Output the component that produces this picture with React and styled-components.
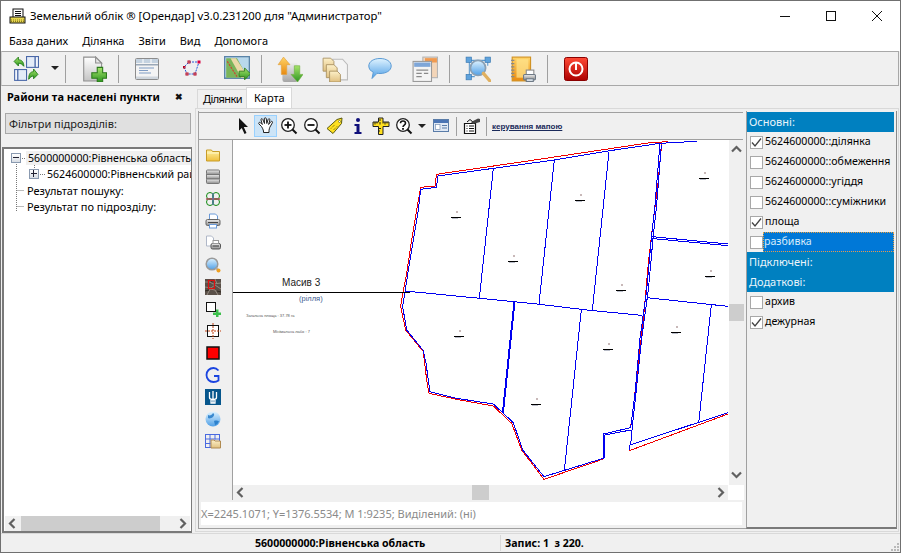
import React from "react";
import styled, { createGlobalStyle } from "styled-components";

const UI_FONT = `"Noto Sans", "Liberation Sans", sans-serif`;

const GlobalStyle = createGlobalStyle`
    html, body { margin: 0; padding: 0; background: #f0f0f0; }
    body { font-family: ${UI_FONT}; font-size: 11px; color: #000; }
    #root { width: 901px; height: 553px; overflow: hidden; }
`;

const Grads = () => {
    const list = [
        ["gPage", "#ffffff", "#c4c4c4"], ["gGreen", "#a6e46a", "#2c9420"], ["gOrange", "#ffd468", "#e88a10"],
        ["gBlue", "#dff3ff", "#4f9fe6"], ["gFolder", "#fff2a8", "#efbf3c"], ["gRed", "#ff4a36", "#ac0000"],
        ["gSteel", "#eeeeee", "#8c8c8c"], ["gTan", "#fdf0c8", "#e0c080"],
    ];
    return (
        <HiddenSvg>
            <defs>
                {list.map(([id, a, b]) => (
                    <linearGradient key={id} id={id} x1="0" y1="0" x2="0" y2="1">
                        <stop offset="0" stopColor={a} />
                        <stop offset="1" stopColor={b} />
                    </linearGradient>
                ))}
            </defs>
        </HiddenSvg>
    );
};

/* --------- toolbar icons (24 box) --------- */
const I = ({ s = 24, children }) => <svg width={s} height={s} viewBox="0 0 24 24">{children}</svg>;

const SyncIcon = () => (
    <I s={26}>
        <g fill="#e4ecf8" stroke="#4a68a8" strokeWidth="1">
            <rect x="12.5" y="0.5" width="8" height="10" /><rect x="20.5" y="0.5" width="3" height="10" fill="#f4f7fc" />
            <rect x="1.5" y="12.5" width="3" height="10" fill="#f4f7fc" /><rect x="4.5" y="12.5" width="8" height="10" />
        </g>
        <path d="M1 5l4-4v2.500c3 0 5 2 5 6-1.500-2-3-2.800-5-2.800v2.500z" fill="url(#gGreen)" stroke="#1c7a14" strokeWidth=".8" />
        <path d="M23 17l-4-5v2.500c-3 0-4.500 2-4.500 7 1.500-2 2.500-3 4.500-3v2.500z" fill="url(#gGreen)" stroke="#1c7a14" strokeWidth=".8" />
    </I>
);
const NewDocIcon = () => (
    <I s={26}>
        <path d="M2.500 1h11l5.500 5.500V23H2.500z" fill="url(#gPage)" stroke="#8f8f8f" />
        <path d="M13.500 1v5.500H19z" fill="#e8e8e8" stroke="#8f8f8f" />
        <path d="M15 10.500h5v5h3.500v5H20v3.500h-5v-3.500h-5v-5h5z" fill="url(#gGreen)" stroke="#2c7a1c" />
    </I>
);
const WindowIcon = () => (
    <I>
        <rect x=".5" y="1.500" width="23" height="21" rx="1" fill="#f4f4f4" stroke="#8c8c8c" />
        <rect x="1" y="2" width="22" height="4" fill="#c4d2e0" />
        <path d="M8 2v4M16 2v4" stroke="#fff" />
        <rect x="1" y="7" width="22" height="1.500" fill="#9aa8b8" />
        <path d="M4 11h15M4 13.500h9M4 16h12" stroke="#7f9cc4" />
        <rect x="1" y="19.500" width="22" height="2.500" fill="#cfd6dd" />
    </I>
);
const PolygonIcon = () => (
    <I>
        <path d="M9 5h10l-4 12H7L4 10z" fill="none" stroke="#2a5ad8" strokeDasharray="2 1" />
        <g fill="#fff" stroke="#b00020">
            <rect x="8" y="4" width="2" height="2" /><rect x="3.500" y="9.500" width="1.500" height="1.500" />
            <rect x="6" y="16" width="2" height="2" /><rect x="14" y="16" width="2" height="2" />
        </g>
        <rect x="17.500" y="3.500" width="3" height="3" fill="#d80040" />
    </I>
);
const MapIcon = () => (
    <I s={26}>
        <rect x=".5" y=".5" width="23" height="20" fill="#b8d8ec" stroke="#5a84a8" strokeWidth="1.400" />
        <path d="M2 2h10l10 18H2z" fill="#7ab45a" />
        <path d="M6 2h5l9 14v4h-4z" fill="#ead9a8" />
        <path d="M3 5l9 14" stroke="#d04030" strokeDasharray="2 1" fill="none" />
        <path d="M14 14h5v-3l5.500 5.500-5.500 5.500v-3h-5z" fill="url(#gGreen)" stroke="#2c7a1c" strokeWidth=".8" />
    </I>
);
const UpDownIcon = () => (
    <I s={26}>
        <rect x="5" y="6" width="14" height="18" rx="2" fill="url(#gSteel)" opacity=".75" />
        <path d="M6 1L1 8h3v9h5V8h3z" fill="url(#gOrange)" stroke="#e0a040" strokeWidth=".6" />
        <path d="M19 24l5-7h-3V9h-5v8h-3z" fill="url(#gGreen)" stroke="#70b040" strokeWidth=".6" />
    </I>
);
const DocsIcon = () => (
    <I s={26}>
        <path d="M10 3h9l4.500 5v14H10z" fill="#f4f4f4" stroke="#bcbcbc" />
        <g fill="url(#gTan)" stroke="#a89060" strokeWidth=".8">
            <path d="M1 2h7l3 3v9H1z" /><path d="M4 8h7l3 3v9H4z" /><path d="M7 14h7l3 3v7H7z" />
        </g>
    </I>
);
const BubbleIcon = () => (
    <I>
        <path d="M12 1.500c6 0 11.200 2.800 11.200 7.500S18 16.500 12 16.500c-1 0-2 0-3-.2L4 21.500l1.300-6.300C2.500 14 .8 11.800.8 9 .8 4.300 6 1.500 12 1.500z" fill="url(#gBlue)" stroke="#5b9bd5" />
    </I>
);
const DocsWinIcon = () => (
    <I s={26}>
        <rect x="10" y="1" width="13.500" height="19" fill="#f3d5b8" stroke="#b4b4b4" />
        <rect x="12" y="2" width="11" height="4" fill="#f09a50" />
        <rect x="1" y="5" width="17" height="18.500" fill="#f4f4f4" stroke="#9a9a9a" />
        <rect x="2" y="6" width="15" height="4" fill="#7ea6d8" />
        <path d="M4 13h11M4 16h5M11 16h4M4 19h5" stroke="#8a8a8a" />
    </I>
);
const NetSearchIcon = () => (
    <I s={26}>
        <path d="M4 4h17M4 4v15M21 4v5M4 19h5" stroke="#5a9ad0" fill="none" />
        <g fill="#5ea2dc" stroke="#3a78b0" strokeWidth=".6">
            <rect x="1" y="1" width="5" height="5" /><rect x="18.500" y="1" width="5" height="5" />
            <rect x="1" y="17" width="5" height="5" />
        </g>
        <circle cx="12" cy="11" r="7" fill="url(#gBlue)" stroke="#8aa0b4" strokeWidth="1.600" />
        <path d="M17 16l6 7" stroke="#e0b060" strokeWidth="3" strokeLinecap="round" />
    </I>
);
const NoteIcon = () => (
    <I s={26}>
        <rect x="2" y="1" width="17" height="22" fill="url(#gOrange)" stroke="#d09020" />
        <rect x="6" y="3" width="11" height="17" fill="#ffe690" opacity=".7" />
        <path d="M1 4h3M1 7h3M1 10h3M1 13h3M1 16h3M1 19h3" stroke="#888" />
        <rect x="15" y="13" width="7" height="5" fill="#fff" stroke="#8a8a8a" />
        <rect x="12.500" y="17" width="11" height="5" rx="1" fill="url(#gSteel)" stroke="#6e7a86" />
        <rect x="15" y="21" width="6.500" height="2.500" fill="#dfe6ee" stroke="#6e7a86" />
    </I>
);
const PowerIcon = () => (
    <I>
        <rect x=".5" y=".5" width="23" height="23" rx="2" fill="url(#gRed)" stroke="#8a0000" />
        <circle cx="12" cy="12" r="6.500" fill="none" stroke="#fff" strokeWidth="2" />
        <rect x="11" y="6" width="2" height="7" fill="#fff" />
    </I>
);

/* --------- map toolbar icons (18 box) --------- */
const M = ({ children, s = 18 }) => <svg width={s} height={s} viewBox="0 0 18 18">{children}</svg>;
const MoveArrow = () => <M><path d="M5 1l9 9H9.800l2.700 6-2 1-2.700-6L5 13.800z" fill="#111" /></M>;
const HandIcon = () => (
    <M><path d="M4.500 9.500L2 7c-1-1 .4-2.300 1.500-1.300l1.800 1.800L4 3c-.4-1.300 1.300-1.800 1.800-.6L7.500 6.500 7.300 1.800c0-1.400 1.900-1.400 2 0l.5 4.700 1.300-4c.4-1.300 2.100-.8 1.800.5L11.600 7.500l2.200-2.800c.9-1 2.300 0 1.500 1.200l-2.500 4.400c-.5 1-.5 2-.8 3.200v2H6.500v-1.500c-.3-1.500-1-3-2-4.500z" fill="#fff" stroke="#222" strokeWidth="1" /></M>
);
const ZoomGlass = ({ plus }) => (
    <M>
        <circle cx="8" cy="8" r="6.300" fill="#fff" stroke="#222" strokeWidth="1.300" />
        <path d="M4.500 8h7" stroke="#111" strokeWidth="1.800" />
        {plus && <path d="M8 4.500v7" stroke="#111" strokeWidth="1.800" />}
        <path d="M12.500 12.500l4 4" stroke="#111" strokeWidth="2" />
    </M>
);
const TagIcon = () => (
    <M>
        <path d="M1 11.500L11 2.500l5-1.500-.5 5.500L7 16.500z" fill="#ffe020" stroke="#5a5a10" />
        <path d="M5 11.500l4-4M7.500 13l4-4" stroke="#5a5a10" strokeDasharray="1 1" />
        <circle cx="13.500" cy="4.500" r="1" fill="#fff" stroke="#5a5a10" strokeWidth=".6" />
    </M>
);
const InfoIcon = () => (
    <M>
        <circle cx="9" cy="3" r="2" fill="#10107a" />
        <path d="M5.500 7h5v8h2v2h-7v-2h2V9h-2z" fill="#10107a" />
    </M>
);
const RulerIcon = () => (
    <M>
        <path d="M6.500 1h4.500v4H17v4.500h-6v8H6.500v-8H1V5h5.500z" fill="#ffe020" stroke="#222" />
        <path d="M3 5v2.500M5 5v1.500M8 5v2.500M11 5v1.500M13 5v2.500M15 5v1.500M6.500 11.500h2.500M6.500 14h1.500M6.500 3h2.500" stroke="#222" />
    </M>
);
const HelpGlass = () => (
    <M>
        <circle cx="8" cy="8" r="6.300" fill="#fff" stroke="#222" strokeWidth="1.300" />
        <path d="M5.500 6.200c0-3 5-3 5 0 0 2-2.500 1.800-2.500 3.800" fill="none" stroke="#111" strokeWidth="1.600" />
        <rect x="7.100" y="11" width="1.800" height="1.800" fill="#111" />
        <path d="M12.500 12.500l4 4" stroke="#111" strokeWidth="2" />
    </M>
);
const PanelIcon = () => (
    <M>
        <rect x=".5" y="2.500" width="15" height="12" fill="#dfe8f4" stroke="#5a7ca8" />
        <rect x="1" y="3" width="14" height="3" fill="#4a74b4" />
        <rect x="2.500" y="7.500" width="4.500" height="5" fill="#fff" stroke="#7b93b4" strokeWidth=".7" />
        <path d="M9 8.500h5M9 11h5" stroke="#5a7ca8" strokeWidth="1.200" />
    </M>
);
const PropsIcon = () => (
    <M>
        <path d="M1.500 6.500h11v10h-11z" fill="#fff" stroke="#111" strokeWidth="1.200" />
        <path d="M4 5l3-2.500 3 2.500" fill="none" stroke="#111" />
        <path d="M3.500 9h1M6 9h5M3.500 11.500h1M6 11.500h5M3.500 14h1M6 14h5" stroke="#111" />
        <path d="M8 5l7-3.500 2 .5v3l-7 2z" fill="#444" />
    </M>
);

/* --------- left strip icons (16 box) --------- */
const S = ({ children }) => <svg width="16" height="16" viewBox="0 0 16 16">{children}</svg>;
const stripIcons = [
    <S><path d="M1.500 3h5l1 1.500h7V14h-13z" fill="url(#gFolder)" stroke="#c89c28" /><path d="M2 6h12" stroke="#fff8c8" /></S>,
    <S><g fill="url(#gSteel)" stroke="#777"><rect x="1.500" y="1" width="13" height="4.500" rx="1" /><rect x="1.500" y="5.500" width="13" height="4.500" /><rect x="1.500" y="10" width="13" height="4.500" rx="1" /></g></S>,
    <S><g fill="none" stroke="#128a12"><circle cx="5" cy="5" r="3.500" /><circle cx="11" cy="5" r="3.500" /><circle cx="5" cy="11" r="3.500" /><circle cx="11" cy="11" r="3.500" /></g><path d="M1 8h14" stroke="#b05060" strokeWidth="1.500" /><path d="M8 2v12" stroke="#5a6ad0" /></S>,
    <S><path d="M4.500 1h6l2 2v5h-8z" fill="#fff" stroke="#6a9ad8" /><rect x="1" y="6.500" width="14" height="6" rx="1.500" fill="url(#gSteel)" stroke="#666" /><path d="M3 9.500h10" stroke="#444" /><rect x="4.500" y="11.500" width="7" height="3.500" fill="#fff" stroke="#6a9ad8" /></S>,
    <S><path d="M1.500 1h5l2 2v8h-7z" fill="#fff" stroke="#b0b8c8" /><rect x="6" y="8.500" width="9.500" height="5.500" rx="1.500" fill="url(#gSteel)" stroke="#555" /><path d="M7.500 11h6.500" stroke="#333" /><rect x="8" y="5.500" width="5.500" height="3" fill="#fff" stroke="#999" /></S>,
    <S><circle cx="7" cy="7" r="5.800" fill="url(#gBlue)" stroke="#9a9a9a" strokeWidth="1.500" /><path d="M11 11l2 2" stroke="#aaa" strokeWidth="2" /><circle cx="13.500" cy="13.500" r="2" fill="#f0a020" /></S>,
    <S>
        <rect width="16" height="16" fill="#5a5048" />
        <path d="M0 3h5l3 2 8-1M0 8l6 1 4-3 6 4M2 16l3-6 5 1 3 5M10 0l2 5" stroke="#948a80" strokeWidth="1" fill="none" />
        <path d="M0 12l4-1M12 12l4 1M6 1l1 2" stroke="#2e2820" fill="none" />
        <rect x="3.500" y="1.500" width="6" height="8" fill="none" stroke="#e01010" strokeWidth="1.200" />
    </S>,
    <S><rect x="1.500" y="1.500" width="9" height="9" fill="#fff" stroke="#111" /><path d="M8 11.500h3V8.500h2.500v3h2.500V14h-2.500v2H11v-2H8z" fill="#3cc04c" /></S>,
    <S><rect x="2.500" y="2.500" width="11" height="11" fill="#fff" stroke="#111" /><path d="M8 0v16M0 8h16" stroke="#c04010" strokeDasharray="2 1" /></S>,
    <S><rect x="2" y="2" width="12" height="12" fill="#f00" stroke="#111" strokeWidth="1.500" /></S>,
    <S><path d="M13.500 3.500C12 1.800 10.500 1 8.500 1 4.500 1 1.500 4 1.500 8s3 7 7 7c2 0 3.800-.6 5-1.500V9H9" fill="none" stroke="#1a44e0" strokeWidth="1.800" /></S>,
    <S><rect width="16" height="16" fill="#06568c" /><path d="M4.500 3v5.500c0 1.500 1.500 2 3.500 2s3.500-.5 3.500-2V3M8 2v12M6 11v3h4v-3" stroke="#fff" strokeWidth="1.300" fill="none" /></S>,
    <S><circle cx="8" cy="8" r="7.500" fill="url(#gBlue)" /><path d="M3 4c2 1 4 0 5-2 2 1 1 3 0 4S4 8 3 7zM9 10c2-1 4 0 5 0-1 3-3 4-4 4z" fill="#1c74c4" opacity=".8" /></S>,
    <S><g fill="none" stroke="#4a6ae0"><rect x=".5" y="1.500" width="14" height="13" /><path d="M5 1.500v13M10 1.500v5M.5 6h14M.5 10.500h5" /></g><path d="M6 7h3l1 1h5.500v7H6z" fill="url(#gTan)" stroke="#b08a50" /></S>,
];

/* --------- the map --------- */
const redLines = [
    "835,35 780,38 600,65 400,95 139,133 136,168 92,172 80,240 65,330 50,430 38,490 32,530 47,600 100,665 110,750 117,790 200,808 310,828 365,880 395,960 462,1048 640,987",
    "815,40 805,150 790,270 775,400 760,570 745,700 730,830 722,890",
    "718,945 718,962 1014,852",
];
const blueLines = [
    "920,34 810,40 660,62 493,90 310,115 143,138 140,172 92,178 85,240 70,330 55,420 45,485 38,530 50,600 100,662 108,700 120,785 200,805 310,822 370,878 398,960 462,1040 640,985 640,912 722,893 735,790 750,625 770,480 785,315 795,225 810,40",
    "645,985 645,915 722,900",
    "720,960 720,945 1014,848",
    "722,945 727,890 740,770 755,625 775,480 790,315 800,225 814,45",
    "45,483 270,505 440,522 600,541 755,556",
    "310,115 268,505", "493,90 447,522", "657,65 607,541",
    "375,515 340,850", "372,515 337,850", "574,540 523,1022",
    "770,503 1014,529", "964,524 926,880",
    "787,320 1014,342", "790,326 1014,347",
];
const lotMarks = [[198, 262], [368, 394], [569, 211], [692, 481], [943, 145], [960, 439], [207, 619], [653, 658], [437, 823], [859, 607]];

const LandMap = () => (
    <MapSvg viewBox="233 140 496 345" width="496" height="345">
        <g transform="translate(390 130) scale(.33333)" fill="none" shapeRendering="crispEdges">
            {redLines.map((p, i) => <polyline key={i} points={p} stroke="#f00000" strokeWidth="1" vectorEffect="non-scaling-stroke" />)}
            {blueLines.map((p, i) => <polyline key={i} points={p} stroke="#0000f0" strokeWidth="1" vectorEffect="non-scaling-stroke" />)}
            {lotMarks.map(([x, y], i) => (
                <g key={i}>
                    <rect x={x - 15} y={y} width="30" height="3" fill="#000" />
                    <rect x={x} y={y - 18} width="6" height="6" fill="#c8b8b8" />
                    <rect x={x - 12} y={y + 3} width="18" height="3" fill="#b8bcc8" />
                </g>
            ))}
        </g>
        <line x1="233" y1="292.500" x2="410" y2="292.500" stroke="#000" shapeRendering="crispEdges" />
        <MapLabel x="282" y="285.500" fontSize="10" fill="#222">Масив 3</MapLabel>
        <MapLabel x="299" y="301" fontSize="7.500" fill="#3a5a90">(рілля)</MapLabel>
        <MapLabel x="246" y="317" fontSize="4" fill="#555">Загальна площа : 37.78 га</MapLabel>
        <MapLabel x="273" y="333" fontSize="4" fill="#555">Мінімальна лабо : 7</MapLabel>
    </MapSvg>
);

/* --------- data --------- */
const menuItems = ["База даних", "Ділянка", "Звіти", "Вид", "Допомога"];

const layerRows = [
    { kind: "group", label: "Основні:" },
    { label: "5624600000::ділянка", checked: true },
    { label: "5624600000::обмеження" },
    { label: "5624600000::угіддя" },
    { label: "5624600000::суміжники" },
    { label: "площа", checked: true },
    { label: "разбивка", selected: true },
    { kind: "group", label: "Підключені:" },
    { kind: "group", label: "Додаткові:" },
    { label: "архив" },
    { label: "дежурная", checked: true },
];

const Chevron = ({ dir }) => {
    const d = { left: "M9.500 3L5 7.500 9.500 12", right: "M5.500 3L10 7.500 5.500 12", up: "M3 9.500L7.500 5 12 9.500", down: "M3 5.500L7.500 10 12 5.500" }[dir];
    return <svg width="15" height="15" viewBox="0 0 15 15"><path d={d} fill="none" stroke="#606060" strokeWidth="2.200" /></svg>;
};

export default function App() {
    return (
        <>
            <GlobalStyle />
            <Grads />
            <Win>
                <TitleBar>
                    <TitleIcon>
                        <svg width="17" height="17" viewBox="0 0 17 17">
                            <rect x="4" y="1" width="10" height="9" fill="#fff" stroke="#111" />
                            <path d="M6 3.500h6M6 5.500h6M6 7.500h6" stroke="#111" />
                            <rect x="1" y="9" width="15" height="6" fill="#e8d850" stroke="#111" />
                            <path d="M2 12h13M2 13.500h13" stroke="#8a7a20" strokeDasharray="1 1" />
                        </svg>
                    </TitleIcon>
                    <TitleText>Земельний облік ® [Орендар] v3.0.231200 для "Администратор"</TitleText>
                    <WinControls>
                        <WinBtn><svg width="12" height="12" viewBox="0 0 12 12"><path d="M1 6.500h10" stroke="#111" /></svg></WinBtn>
                        <WinBtn><svg width="12" height="12" viewBox="0 0 12 12"><rect x="1.500" y="1.500" width="9" height="9" fill="none" stroke="#111" /></svg></WinBtn>
                        <WinBtn><svg width="12" height="12" viewBox="0 0 12 12"><path d="M1 1l10 10M11 1L1 11" stroke="#111" /></svg></WinBtn>
                    </WinControls>
                </TitleBar>

                <MenuBar>
                    {menuItems.map((m) => <MenuItem key={m}>{m}</MenuItem>)}
                </MenuBar>

                <MainToolbar>
                    <ToolCell><SyncIcon /></ToolCell>
                    <DropArrow />
                    <ToolSep />
                    <ToolCell><NewDocIcon /></ToolCell>
                    <ToolSep />
                    <ToolCell><WindowIcon /></ToolCell>
                    <ToolCell><PolygonIcon /></ToolCell>
                    <ToolCell><MapIcon /></ToolCell>
                    <ToolSep />
                    <ToolCell><UpDownIcon /></ToolCell>
                    <ToolCell><DocsIcon /></ToolCell>
                    <ToolCell><BubbleIcon /></ToolCell>
                    <ToolCell><DocsWinIcon /></ToolCell>
                    <ToolSep />
                    <ToolCell><NetSearchIcon /></ToolCell>
                    <ToolCell><NoteIcon /></ToolCell>
                    <ToolSep />
                    <ToolCell><PowerIcon /></ToolCell>
                </MainToolbar>

                <MainArea>
                    <LeftPanel>
                        <PanelHead>
                            <span>Райони та населені пункти</span>
                            <PanelClose>✖</PanelClose>
                        </PanelHead>
                        <FilterBox>Фільтри підрозділів:</FilterBox>
                        <TreeBox>
                            <TreeScroll>
                                <TreeLines width="60" height="70" viewBox="0 0 60 70">
                                    <path d="M12.500 15v47M12.500 41.500h8M12.500 57.500h8M18 9.500h5M30.500 16v5M36 25.500h6" stroke="#777" strokeDasharray="1 1" fill="none" />
                                </TreeLines>
                                <TreeRow $pad={7}>
                                    <Expander $open />
                                    <TreeLabel $gap={5} $pad={2} $active>5600000000:Рівненська область</TreeLabel>
                                </TreeRow>
                                <TreeRow $pad={25}>
                                    <Expander />
                                    <TreeLabel $gap={8}>5624600000:Рівненський район</TreeLabel>
                                </TreeRow>
                                <TreeRow $pad={23}><TreeLabel>Результат пошуку:</TreeLabel></TreeRow>
                                <TreeRow $pad={23}><TreeLabel>Результат по підрозділу:</TreeLabel></TreeRow>
                            </TreeScroll>
                            <HBar>
                                <Chevron dir="left" />
                                <HTrack $left={1}><HThumb $w={139} /></HTrack>
                                <Chevron dir="right" />
                            </HBar>
                        </TreeBox>
                    </LeftPanel>

                    <RightArea>
                        <TabStrip>
                            <Tab>Ділянки</Tab>
                            <Tab $active>Карта</Tab>
                        </TabStrip>
                        <Sheet>
                            <CenterCol>
                                <MapToolbar>
                                    <MapTool><MoveArrow /></MapTool>
                                    <MapTool $on><HandIcon /></MapTool>
                                    <MapTool><ZoomGlass plus /></MapTool>
                                    <MapTool><ZoomGlass /></MapTool>
                                    <MapTool><TagIcon /></MapTool>
                                    <MapTool><InfoIcon /></MapTool>
                                    <MapTool><RulerIcon /></MapTool>
                                    <MapTool><HelpGlass /></MapTool>
                                    <DropArrow />
                                    <MapTool><PanelIcon /></MapTool>
                                    <MapSep />
                                    <MapTool><PropsIcon /></MapTool>
                                    <MapSep />
                                    <MapLink>керування мапою</MapLink>
                                </MapToolbar>
                                <MapBody>
                                    <IconStrip>
                                        {stripIcons.map((ic, i) => <StripCell key={i}>{ic}</StripCell>)}
                                    </IconStrip>
                                    <MapColumn>
                                        <MapRow>
                                            <MapCanvas><LandMap /></MapCanvas>
                                            <VBar>
                                                <Chevron dir="up" />
                                                <VTrack $top={147}><VThumb /></VTrack>
                                                <Chevron dir="down" />
                                            </VBar>
                                        </MapRow>
                                        <MapHRow>
                                            <HBar $grow>
                                                <Chevron dir="left" />
                                                <HTrack $left={224}><HThumb $w={17} /></HTrack>
                                                <Chevron dir="right" />
                                            </HBar>
                                            <ScrollCorner />
                                        </MapHRow>
                                    </MapColumn>
                                </MapBody>
                                <CoordBar>
                                    <CoordText>X=2245.1071; Y=1376.5534; M 1:9235; Виділений: (ні)</CoordText>
                                </CoordBar>
                            </CenterCol>
                            <LayerPanel>
                                {layerRows.map((r) =>
                                    r.kind === "group" ? (
                                        <GroupRow key={r.label}>{r.label}</GroupRow>
                                    ) : (
                                        <LayerRow key={r.label}>
                                            <CheckBox>
                                                {r.checked && (
                                                    <svg width="13" height="13" viewBox="0 0 13 13">
                                                        <path d="M2 6.500l3 3.500 6-7.500" fill="none" stroke="#444" strokeWidth="1.300" />
                                                    </svg>
                                                )}
                                            </CheckBox>
                                            <LayerLabel $selected={r.selected}>{r.label}</LayerLabel>
                                        </LayerRow>
                                    )
                                )}
                            </LayerPanel>
                        </Sheet>
                    </RightArea>
                </MainArea>

                <StatusBar>
                    <StatusCell $w={499} $pad={254}>5600000000:Рівненська область</StatusCell>
                    <StatusCell $divider $pad={4}>Запис: 1&nbsp; з 220.</StatusCell>
                    <Grip>
                        <svg width="10" height="10" viewBox="0 0 10 10" fill="#b8b8b8">
                            <rect x="7" y="1" width="2" height="2" /><rect x="4" y="4" width="2" height="2" /><rect x="7" y="4" width="2" height="2" />
                            <rect x="1" y="7" width="2" height="2" /><rect x="4" y="7" width="2" height="2" /><rect x="7" y="7" width="2" height="2" />
                        </svg>
                    </Grip>
                </StatusBar>
            </Win>
        </>
    );
}

const HiddenSvg = styled.svg`
    position: absolute;
    width: 0;
    height: 0;
`;

const Win = styled.div`
    box-sizing: border-box;
    width: 901px;
    height: 553px;
    border: 1px solid #707070;
    background: #f0f0f0;
    display: flex;
    flex-direction: column;
    overflow: hidden;
`;

const TitleBar = styled.div`
    height: 30px;
    background: #fff;
    display: flex;
    align-items: center;
    flex: none;
`;

const TitleIcon = styled.div`
    width: 29px;
    padding-left: 8px;
    box-sizing: border-box;
    display: flex;
    align-items: center;
`;

const TitleText = styled.div`
    flex: 1;
    white-space: nowrap;
    font-size: 11.3px;
    padding-bottom: 2px;
`;

const WinControls = styled.div`
    display: flex;
    height: 30px;
`;

const WinBtn = styled.div`
    width: 46px;
    display: flex;
    align-items: center;
    justify-content: center;
`;

const MenuBar = styled.div`
    box-sizing: border-box;
    height: 20px;
    background: #fff;
    display: flex;
    align-items: center;
    padding: 0 0 2px 1px;
    flex: none;
`;

const MenuItem = styled.div`
    padding: 0 7px;
`;

const MainToolbar = styled.div`
    box-sizing: border-box;
    height: 35px;
    margin-right: 1px;
    border: 1px solid #a8a8a8;
    border-left-color: #d0d0d0;
    display: flex;
    align-items: center;
    padding-left: 1px;
    flex: none;
`;

const ToolCell = styled.div`
    width: 45px;
    height: 28px;
    display: flex;
    align-items: center;
    justify-content: center;
`;

const DropArrow = styled.div`
    width: 15px;
    height: 5px;
    position: relative;
    flex: none;
    &::after {
        content: "";
        position: absolute;
        left: 3px;
        top: 0;
        border-left: 4px solid transparent;
        border-right: 4px solid transparent;
        border-top: 4px solid #222;
    }
`;

const ToolSep = styled.div`
    width: 1px;
    height: 28px;
    background: #a0a0a0;
    margin: 0 5px 0 2px;
    flex: none;
`;

const MainArea = styled.div`
    flex: 1;
    display: flex;
    min-height: 0;
`;

const LeftPanel = styled.div`
    width: 191px;
    flex: none;
    display: flex;
    flex-direction: column;
`;

const PanelHead = styled.div`
    height: 27px;
    flex: none;
    box-sizing: border-box;
    padding: 0 0 6px 6px;
    display: flex;
    align-items: center;
    font-weight: 700;
    white-space: nowrap;
`;

const PanelClose = styled.span`
    margin-left: auto;
    margin-right: 9px;
    font-size: 9px;
    color: #111;
`;

const FilterBox = styled.div`
    box-sizing: border-box;
    height: 21px;
    margin: 0 1px 0 4px;
    flex: none;
    background: #e0e0e0;
    border: 1px solid #a8a8a8;
    display: flex;
    align-items: center;
    padding-left: 3px;
    color: #222;
`;

const TreeBox = styled.div`
    flex: 1;
    margin: 13px 0 0 1px;
    border: 1px solid #7a7a7a;
    border-left-width: 2px;
    border-top-width: 2px;
    border-bottom-width: 2px;
    min-height: 0;
    display: flex;
    flex-direction: column;
    background: #fff;
`;

const TreeScroll = styled.div`
    flex: 1;
    position: relative;
    overflow: hidden;
    padding-top: 1px;
`;

const TreeLines = styled.svg`
    position: absolute;
    left: 0;
    top: 0;
`;

const TreeRow = styled.div`
    height: 16px;
    display: flex;
    align-items: center;
    padding-left: ${(p) => p.$pad}px;
    white-space: nowrap;
    position: relative;
`;

const Expander = styled.span`
    box-sizing: border-box;
    width: 10px;
    height: 10px;
    flex: none;
    border: 1px solid #8a9ab0;
    background: linear-gradient(#fff, #d8dde4);
    position: relative;
    &::before {
        content: "";
        position: absolute;
        left: 1px;
        right: 1px;
        top: 3px;
        height: 1px;
        background: #223;
    }
    &::after {
        content: "";
        display: ${(p) => (p.$open ? "none" : "block")};
        position: absolute;
        top: 0;
        bottom: 1px;
        left: 3px;
        width: 1px;
        background: #223;
    }
`;

const TreeLabel = styled.span`
    margin-left: ${(p) => p.$gap || 0}px;
    padding-left: ${(p) => p.$pad || 0}px;
    flex: ${(p) => (p.$active ? 1 : "none")};
    font-size: ${(p) => (p.$gap ? 10.6 : 11)}px;
    background: ${(p) => (p.$active ? "#f0f0f0" : "transparent")};
`;

const HBar = styled.div`
    height: 15px;
    flex: ${(p) => (p.$grow ? 1 : "none")};
    display: flex;
    align-items: center;
    background: #f0f0f0;
    margin: ${(p) => (p.$grow ? 0 : "0 1px")};
    svg { flex: none; }
`;

const HTrack = styled.div`
    flex: 1;
    height: 15px;
    padding-left: ${(p) => p.$left}px;
`;

const HThumb = styled.div`
    width: ${(p) => p.$w}px;
    height: 15px;
    background: #cdcdcd;
`;

const RightArea = styled.div`
    flex: 1;
    min-width: 0;
    margin-left: 3px;
    display: flex;
    flex-direction: column;
`;

const TabStrip = styled.div`
    height: 22px;
    flex: none;
    display: flex;
    align-items: flex-end;
    padding-left: 2px;
`;

const Tab = styled.div`
    box-sizing: border-box;
    height: ${(p) => (p.$active ? 21 : 19)}px;
    padding: 0 ${(p) => (p.$active ? 7 : 5)}px;
    width: ${(p) => (p.$active ? 46 : 50)}px;
    background: ${(p) => (p.$active ? "#fff" : "#f0f0f0")};
    border: 1px solid #d9d9d9;
    border-bottom: 0;
    line-height: ${(p) => (p.$active ? 19 : 17)}px;
    letter-spacing: ${(p) => (p.$active ? 0 : -0.6)}px;
    white-space: nowrap;
    margin-right: -1px;
`;

const Sheet = styled.div`
    flex: none;
    height: 424px;
    box-sizing: border-box;
    border: 1px solid #d9d9d9;
    margin-right: 1px;
    padding: 2px 1px 2px 2px;
    display: flex;
    background: #f0f0f0;
`;

const CenterCol = styled.div`
    width: 548px;
    height: 418px;
    flex: none;
    box-sizing: border-box;
    border-left: 1px solid #a0a0a0;
    border-bottom: 1px solid #a0a0a0;
    display: flex;
    flex-direction: column;
`;

const MapToolbar = styled.div`
    box-sizing: border-box;
    height: 28px;
    flex: none;
    margin: 1px 3px 0 0;
    border-top: 1px solid #a0a0a0;
    border-bottom: 1px solid #a0a0a0;
    display: flex;
    align-items: center;
    padding-left: 32px;
`;

const MapTool = styled.div`
    box-sizing: border-box;
    width: 23px;
    height: 22px;
    display: flex;
    align-items: center;
    justify-content: center;
    flex: none;
    background: ${(p) => (p.$on ? "#cce4f7" : "transparent")};
    border: 1px solid ${(p) => (p.$on ? "#99d1ff" : "transparent")};
`;

const MapSep = styled.div`
    width: 1px;
    height: 19px;
    background: #a0a0a0;
    margin: 0 3px;
    flex: none;
`;

const MapLink = styled.span`
    font-family: "Liberation Sans", sans-serif;
    font-size: 8px;
    font-weight: 700;
    color: #1a2a5a;
    text-decoration: underline;
    white-space: nowrap;
    margin-left: 2px;
`;

const MapBody = styled.div`
    display: flex;
    flex: none;
    height: 360px;
`;

const IconStrip = styled.div`
    width: 34px;
    flex: none;
    box-sizing: border-box;
    border-right: 1px solid #a0a0a0;
    padding-top: 4px;
    display: flex;
    flex-direction: column;
    align-items: flex-start;
`;

const StripCell = styled.div`
    height: 22px;
    width: 28px;
    display: flex;
    align-items: center;
    justify-content: center;
    flex: none;
`;

const MapColumn = styled.div`
    width: 511px;
    display: flex;
    flex-direction: column;
`;

const MapRow = styled.div`
    display: flex;
    height: 345px;
    flex: none;
`;

const MapCanvas = styled.div`
    width: 496px;
    height: 345px;
    background: #fff;
    flex: none;
`;

const MapSvg = styled.svg`
    display: block;
`;

const MapLabel = styled.text`
    font-family: "Liberation Sans", sans-serif;
`;

const VBar = styled.div`
    width: 15px;
    background: #f0f0f0;
    display: flex;
    flex-direction: column;
    align-items: center;
    justify-content: space-between;
    flex: none;
    padding: 2px 0 3px;
    box-sizing: border-box;
`;

const VTrack = styled.div`
    flex: 1;
    width: 15px;
    padding-top: ${(p) => p.$top}px;
`;

const VThumb = styled.div`
    width: 15px;
    height: 17px;
    background: #cdcdcd;
`;

const MapHRow = styled.div`
    display: flex;
    height: 15px;
    flex: none;
`;

const ScrollCorner = styled.div`
    width: 16px;
    background: #fff;
    flex: none;
`;

const CoordBar = styled.div`
    flex: 1;
    padding: 2px 4px 3px 2px;
    display: flex;
`;

const CoordText = styled.div`
    flex: 1;
    background: #fff;
    display: flex;
    align-items: center;
    color: #8a8a8a;
    white-space: nowrap;
`;

const LayerPanel = styled.div`
    box-sizing: border-box;
    width: 151px;
    height: 418px;
    flex: none;
    border: 1px solid #8a8a8a;
    border-top: 0;
    border-left: 1px solid #a0a0a0;
    border-bottom: 2px solid #7a7a7a;
    padding: 1px 2px 0 0;
    background: #f0f0f0;
`;

const GroupRow = styled.div`
    box-sizing: border-box;
    height: 20px;
    background: #0080c0;
    color: #eaf4fa;
    display: flex;
    align-items: center;
    padding: 0 0 2px 2px;
`;

const LayerRow = styled.div`
    height: 20px;
    display: flex;
    align-items: center;
    padding-left: 3px;
    font-size: 10.6px;
    white-space: nowrap;
`;

const CheckBox = styled.span`
    box-sizing: border-box;
    width: 13px;
    height: 13px;
    border: 1px solid #a8a8a8;
    background: #fff;
    flex: none;
    display: flex;
    svg { display: block; margin: -1px; }
`;

const LayerLabel = styled.span`
    margin-left: ${(p) => (p.$selected ? 0 : 2)}px;
    padding: 0 0 2px ${(p) => (p.$selected ? 1 : 0)}px;
    flex: ${(p) => (p.$selected ? 1 : "none")};
    align-self: stretch;
    display: flex;
    align-items: center;
    box-sizing: border-box;
    background: ${(p) => (p.$selected ? "#0078d7" : "transparent")};
    color: ${(p) => (p.$selected ? "#d8ecfb" : "#000")};
    outline: ${(p) => (p.$selected ? "1px dotted #e8a040" : "none")};
    outline-offset: -1px;
`;

const StatusBar = styled.div`
    box-sizing: border-box;
    height: 19px;
    flex: none;
    border-top: 1px solid #d9d9d9;
    display: flex;
    align-items: center;
    font-weight: 700;
    font-size: 10.6px;
    position: relative;
`;

const StatusCell = styled.div`
    box-sizing: border-box;
    width: ${(p) => (p.$w ? `${p.$w}px` : "auto")};
    padding-left: ${(p) => p.$pad}px;
    border-left: ${(p) => (p.$divider ? "1px solid #d9d9d9" : "0")};
    height: 16px;
    display: flex;
    align-items: center;
    white-space: nowrap;
`;

const Grip = styled.div`
    position: absolute;
    right: 0;
    bottom: 0;
    width: 10px;
    height: 10px;
    line-height: 0;
`;
